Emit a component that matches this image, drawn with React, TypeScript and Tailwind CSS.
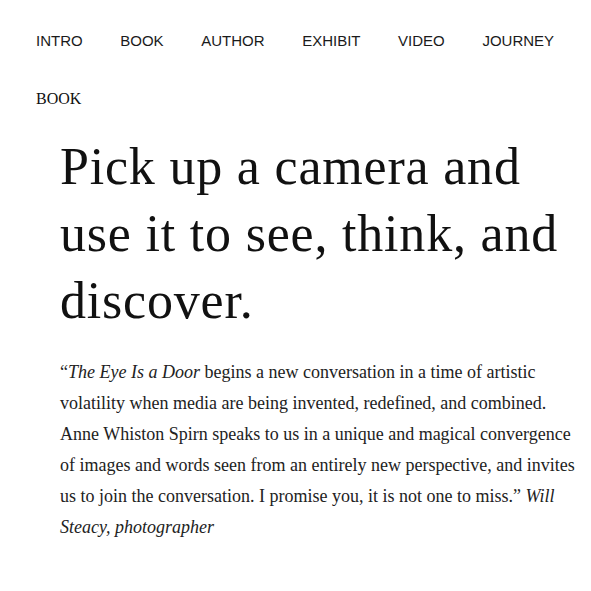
const navItems = ["INTRO", "BOOK", "AUTHOR", "EXHIBIT", "VIDEO", "JOURNEY"];

export default function App() {
  return (
    <div className="min-h-[591px] bg-white text-[#111]">
      <nav className="pt-[31px] pl-[36px]">
        <ul className="flex gap-[37.6px] font-['Liberation_Sans',Arial,sans-serif] text-[15px] leading-[20px] text-[#1a1a1a]">
          {navItems.map((item) => (
            <li key={item}>{item}</li>
          ))}
        </ul>
      </nav>
      <div className="pl-[36px] pt-[36px] font-['Liberation_Serif','Times_New_Roman',serif] text-[16px] leading-[24px]">
        BOOK
      </div>
      <main className="pl-[60px] font-['Liberation_Serif','Times_New_Roman',serif]">
        <h1 className="pt-[22px] pr-[16px] text-[52px] leading-[67px] tracking-[0.8px] font-normal text-[#111]">
          Pick up a camera and use it to see, think, and discover.
        </h1>
        <p className="mt-[23px] text-[18px] leading-[31px] text-[#222] whitespace-nowrap">
          “<em>The Eye Is a Door</em> begins a new conversation in a time of artistic
          <br />
          volatility when media are being invented, redefined, and combined.
          <br />
          Anne Whiston Spirn speaks to us in a unique and magical convergence
          <br />
          of images and words seen from an entirely new perspective, and invites
          <br />
          us to join the conversation. I promise you, it is not one to miss.” <em>Will</em>
          <br />
          <em>Steacy, photographer</em>
        </p>
      </main>
    </div>
  );
}
